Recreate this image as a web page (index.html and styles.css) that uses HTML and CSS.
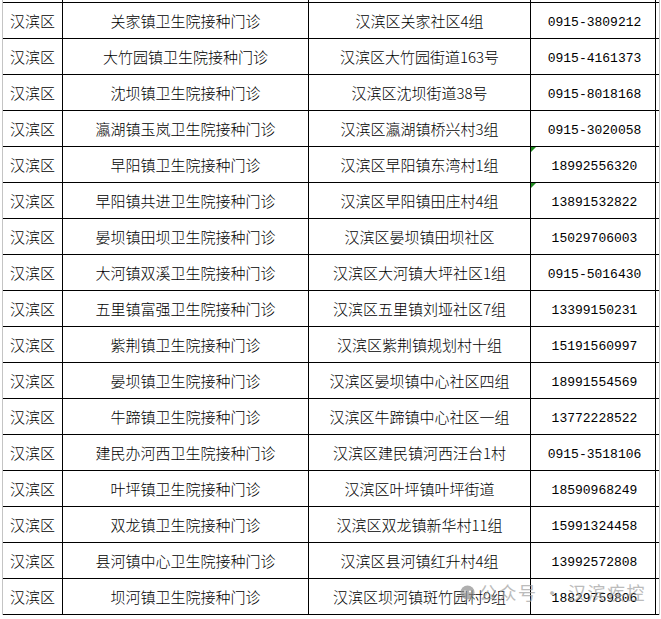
FILE: index.html
```html
<!DOCTYPE html>
<html lang="zh-CN">
<head>
<meta charset="utf-8">
<title>汉滨区接种门诊</title>
<link rel="stylesheet" href="styles.css">
</head>
<body>
<div class="sheet">
  <div class="row cut"><div class="c1"></div><div class="c2"></div><div class="c3"></div><div class="c4 tel">0915-3235778</div></div>
  <div class="row"><div class="c1">汉滨区</div><div class="c2">关家镇卫生院接种门诊</div><div class="c3">汉滨区关家社区4组</div><div class="c4 tel">0915-3809212</div></div>
  <div class="row"><div class="c1">汉滨区</div><div class="c2">大竹园镇卫生院接种门诊</div><div class="c3">汉滨区大竹园街道163号</div><div class="c4 tel">0915-4161373</div></div>
  <div class="row"><div class="c1">汉滨区</div><div class="c2">沈坝镇卫生院接种门诊</div><div class="c3">汉滨区沈坝街道38号</div><div class="c4 tel">0915-8018168</div></div>
  <div class="row"><div class="c1">汉滨区</div><div class="c2">瀛湖镇玉岚卫生院接种门诊</div><div class="c3">汉滨区瀛湖镇桥兴村3组</div><div class="c4 tel">0915-3020058</div></div>
  <div class="row"><div class="c1">汉滨区</div><div class="c2">早阳镇卫生院接种门诊</div><div class="c3">汉滨区早阳镇东湾村1组</div><div class="c4 tel flag">18992556320</div></div>
  <div class="row"><div class="c1">汉滨区</div><div class="c2">早阳镇共进卫生院接种门诊</div><div class="c3">汉滨区早阳镇田庄村4组</div><div class="c4 tel flag">13891532822</div></div>
  <div class="row"><div class="c1">汉滨区</div><div class="c2">晏坝镇田坝卫生院接种门诊</div><div class="c3">汉滨区晏坝镇田坝社区</div><div class="c4 tel">15029706003</div></div>
  <div class="row"><div class="c1">汉滨区</div><div class="c2">大河镇双溪卫生院接种门诊</div><div class="c3">汉滨区大河镇大坪社区1组</div><div class="c4 tel">0915-5016430</div></div>
  <div class="row"><div class="c1">汉滨区</div><div class="c2">五里镇富强卫生院接种门诊</div><div class="c3">汉滨区五里镇刘垭社区7组</div><div class="c4 tel">13399150231</div></div>
  <div class="row"><div class="c1">汉滨区</div><div class="c2">紫荆镇卫生院接种门诊</div><div class="c3">汉滨区紫荆镇规划村十组</div><div class="c4 tel">15191560997</div></div>
  <div class="row"><div class="c1">汉滨区</div><div class="c2">晏坝镇卫生院接种门诊</div><div class="c3">汉滨区晏坝镇中心社区四组</div><div class="c4 tel">18991554569</div></div>
  <div class="row"><div class="c1">汉滨区</div><div class="c2">牛蹄镇卫生院接种门诊</div><div class="c3">汉滨区牛蹄镇中心社区一组</div><div class="c4 tel">13772228522</div></div>
  <div class="row"><div class="c1">汉滨区</div><div class="c2">建民办河西卫生院接种门诊</div><div class="c3">汉滨区建民镇河西汪台1村</div><div class="c4 tel">0915-3518106</div></div>
  <div class="row"><div class="c1">汉滨区</div><div class="c2">叶坪镇卫生院接种门诊</div><div class="c3">汉滨区叶坪镇叶坪街道</div><div class="c4 tel">18590968249</div></div>
  <div class="row"><div class="c1">汉滨区</div><div class="c2">双龙镇卫生院接种门诊</div><div class="c3">汉滨区双龙镇新华村11组</div><div class="c4 tel">15991324458</div></div>
  <div class="row"><div class="c1">汉滨区</div><div class="c2">县河镇中心卫生院接种门诊</div><div class="c3">汉滨区县河镇红升村4组</div><div class="c4 tel">13992572808</div></div>
  <div class="row"><div class="c1">汉滨区</div><div class="c2">坝河镇卫生院接种门诊</div><div class="c3">汉滨区坝河镇斑竹园村9组</div><div class="c4 tel">18829759806</div></div>
</div>
<div class="watermark">
  <svg class="wm-icon" width="17" height="15" viewBox="0 0 17 15"><circle cx="8.5" cy="7.5" r="7" fill="#8e8e8e"/><circle cx="6" cy="6.5" r="1.1" fill="#fff"/><circle cx="11" cy="6.5" r="1.1" fill="#fff"/></svg>
  <span>公众号 · 汉滨疾控</span>
</div>
</body>
</html>
```

FILE: styles.css
```css
html, body {
  margin: 0;
  padding: 0;
  background: #fff;
  overflow: hidden;
  width: 661px;
  height: 619px;
}
body {
  position: relative;
  font-family: "Noto Sans CJK SC", "Noto Sans", sans-serif;
  font-size: 15px;
  font-weight: 300;
  color: #000;
}
.sheet {
  margin-left: 2px;
  margin-top: -33px;
  width: 656px;
  border-left: 1px solid #c4c4c4;
  border-right: 1px solid #c4c4c4;
}
.row {
  display: grid;
  grid-template-columns: 60px 246px 222px 125px;
  height: 36px;
  box-sizing: border-box;
  border-bottom: 1px solid #000;
}
.row > div {
  display: flex;
  align-items: center;
  justify-content: center;
  box-sizing: border-box;
  border-right: 1px solid #000;
  line-height: 18px;
  white-space: nowrap;
  position: relative;
}
.row.cut > div {
  align-items: flex-end;
  line-height: 12px;
}
.tel {
  font-family: "Liberation Mono", monospace;
  font-size: 13px;
  font-weight: 400;
  padding-left: 3px;
  padding-top: 4px;
}
.row.cut > .tel {
  padding-top: 0;
}
.flag::before {
  content: "";
  position: absolute;
  left: 0;
  top: 0;
  border-top: 5px solid #1f8a1f;
  border-right: 5px solid transparent;
}
.watermark {
  position: absolute;
  left: 459px;
  top: 581px;
  display: flex;
  align-items: center;
  gap: 3px;
  opacity: 0.7;
  color: #a0a0a0;
  font-size: 18px;
  font-weight: 400;
  letter-spacing: 1.5px;
  line-height: 22px;
}
```
